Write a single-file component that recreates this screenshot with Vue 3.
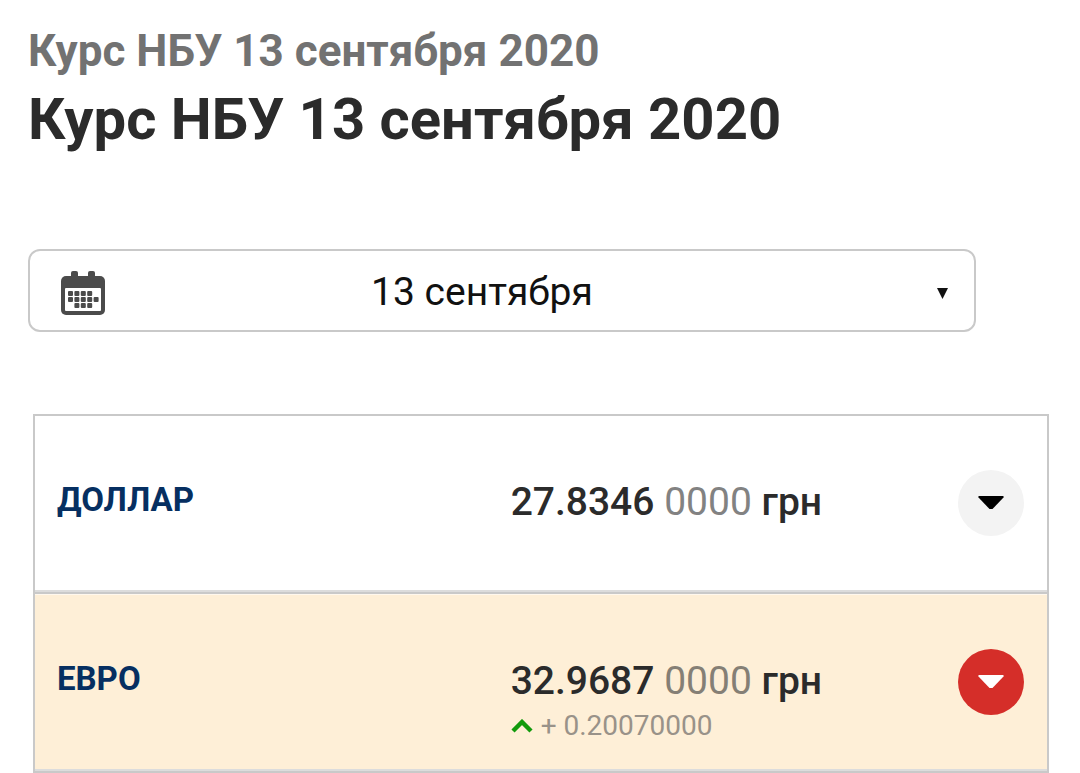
<script setup>
import { ref } from 'vue'

const title = 'Курс НБУ 13 сентября 2020'
const date = ref('13 сентября')
const rates = [
  { name: 'ДОЛЛАР', main: '27.8346', rest: '0000', delta: '' },
  { name: 'ЕВРО', main: '32.9687', rest: '0000', delta: '+ 0.20070000' },
]
const active = ref('ЕВРО')
</script>

<template>
  <main class="page">
    <p class="crumb">{{ title }}</p>
    <h1 class="title">{{ title }}</h1>

    <div class="picker">
      <svg class="calendar" viewBox="0 0 44 44" aria-hidden="true">
        <rect x="10" y="0" width="7" height="10" rx="2" fill="#4b4b4b" />
        <rect x="27" y="0" width="7" height="10" rx="2" fill="#4b4b4b" />
        <rect x="0" y="5" width="44" height="39" rx="5" fill="#4b4b4b" />
        <rect x="4" y="17" width="36" height="23" rx="1" fill="#fff" />
        <g fill="#4b4b4b">
          <rect v-for="c in 4" :key="'a' + c" :x="0.6 + c * 6.4" y="20" width="5" height="5" rx="1" />
          <rect v-for="c in 5" :key="'b' + c" :x="0.6 + c * 6.4" y="26" width="5" height="5" rx="1" />
          <rect v-for="c in 3" :key="'c' + c" :x="7 + c * 6.4" y="32" width="5" height="5" rx="1" />
        </g>
      </svg>
      <select v-model="date" class="select" aria-label="Дата">
        <option>13 сентября</option>
      </select>
      <svg class="arrow" viewBox="0 0 11 11" aria-hidden="true">
        <path d="M0 0H11L5.5 11Z" fill="#111" />
      </svg>
    </div>

    <table class="rates">
      <tbody>
        <tr v-for="r in rates" :key="r.name" :class="{ active: r.name === active }">
          <th scope="row" class="name">{{ r.name }}</th>
          <td class="rate">
            <div class="value">{{ r.main }} <span class="rest">{{ r.rest }}</span> грн</div>
            <div v-if="r.delta" class="delta">
              <svg class="up" viewBox="0 0 22 14" aria-hidden="true">
                <path d="M2 12L11 3L20 12" fill="none" stroke="#129a0c" stroke-width="4.4" />
              </svg>
              <span>{{ r.delta }}</span>
            </div>
          </td>
          <td class="action">
            <button type="button" class="toggle" :aria-label="r.name" @click="active = r.name">
              <svg class="caret" viewBox="0 0 26 14" aria-hidden="true">
                <path d="M0.5 0H25.5V1.5L14.5 13H11.5L0.5 1.5Z" fill="currentColor" />
              </svg>
            </button>
          </td>
        </tr>
      </tbody>
    </table>
  </main>
</template>

<style>
body {
  background: #fff;
}
</style>

<style scoped>
.page {
  font-family: Roboto, "Liberation Sans", sans-serif;
  color: #2b2b2b;
  padding: 25px 31px 0 28px;
}
.crumb {
  margin: 0 0 8px;
  font-size: 44px;
  line-height: 52px;
  font-weight: 700;
  color: #727272;
}
.title {
  margin: 0;
  font-size: 58px;
  line-height: 68px;
  font-weight: 700;
}
.picker {
  position: relative;
  margin: 96px 73px 82px 0;
}
.select {
  appearance: none;
  display: block;
  box-sizing: border-box;
  width: 100%;
  height: 83px;
  padding: 2px 72px 0 32px;
  border: 2px solid #c9c9c9;
  border-radius: 12px;
  background: transparent;
  font: 400 39px/46px Roboto, "Liberation Sans", sans-serif;
  color: #111;
  text-align: center;
  text-align-last: center;
}
.calendar {
  position: absolute;
  left: 33px;
  top: 22px;
  width: 44px;
  height: 44px;
}
.arrow {
  position: absolute;
  right: 28px;
  top: 39px;
  width: 11px;
  height: 11px;
  pointer-events: none;
}
.rates {
  box-sizing: border-box;
  width: calc(100% - 5px);
  margin-left: 5px;
  border: 2px solid #c9c9c9;
  border-bottom: 0;
  border-collapse: separate;
  border-spacing: 0;
  table-layout: fixed;
}
.rates th,
.rates td {
  box-sizing: border-box;
  height: 178px;
  padding: 0;
  vertical-align: top;
  border-bottom: 2px solid #c9c9c9;
  box-shadow: inset 0 -2px #dcdcdc;
}
.rates .active th,
.rates .active td {
  height: 179px;
  border-top: 1px solid #fff8ee;
  background: #feefd7;
}
.rates .name {
  width: 47%;
  padding: 61px 0 0 22px;
  font-size: 33px;
  line-height: 46px;
  font-weight: 700;
  text-align: left;
  color: #062f61;
}
.rates .rate {
  padding-top: 63px;
}
.value {
  font-size: 39px;
  line-height: 46px;
  font-weight: 500;
}
.rest {
  font-weight: 400;
  color: #828282;
}
.active .rest {
  color: #857f75;
}
.delta {
  display: flex;
  align-items: center;
  gap: 8px;
  font-size: 28px;
  line-height: 44px;
  color: #999289;
}
.up {
  width: 22px;
  height: 14px;
}
.rates .action {
  width: 112px;
  padding: 54px 23px 0 0;
}
.toggle {
  display: flex;
  align-items: center;
  justify-content: center;
  width: 66px;
  height: 66px;
  margin-left: auto;
  padding: 0;
  border: 0;
  border-radius: 50%;
  background: #f3f3f3;
  color: #000;
  cursor: pointer;
}
.active .toggle {
  background: #d52e29;
  color: #fff;
}
.caret {
  width: 26px;
  height: 14px;
}
</style>
